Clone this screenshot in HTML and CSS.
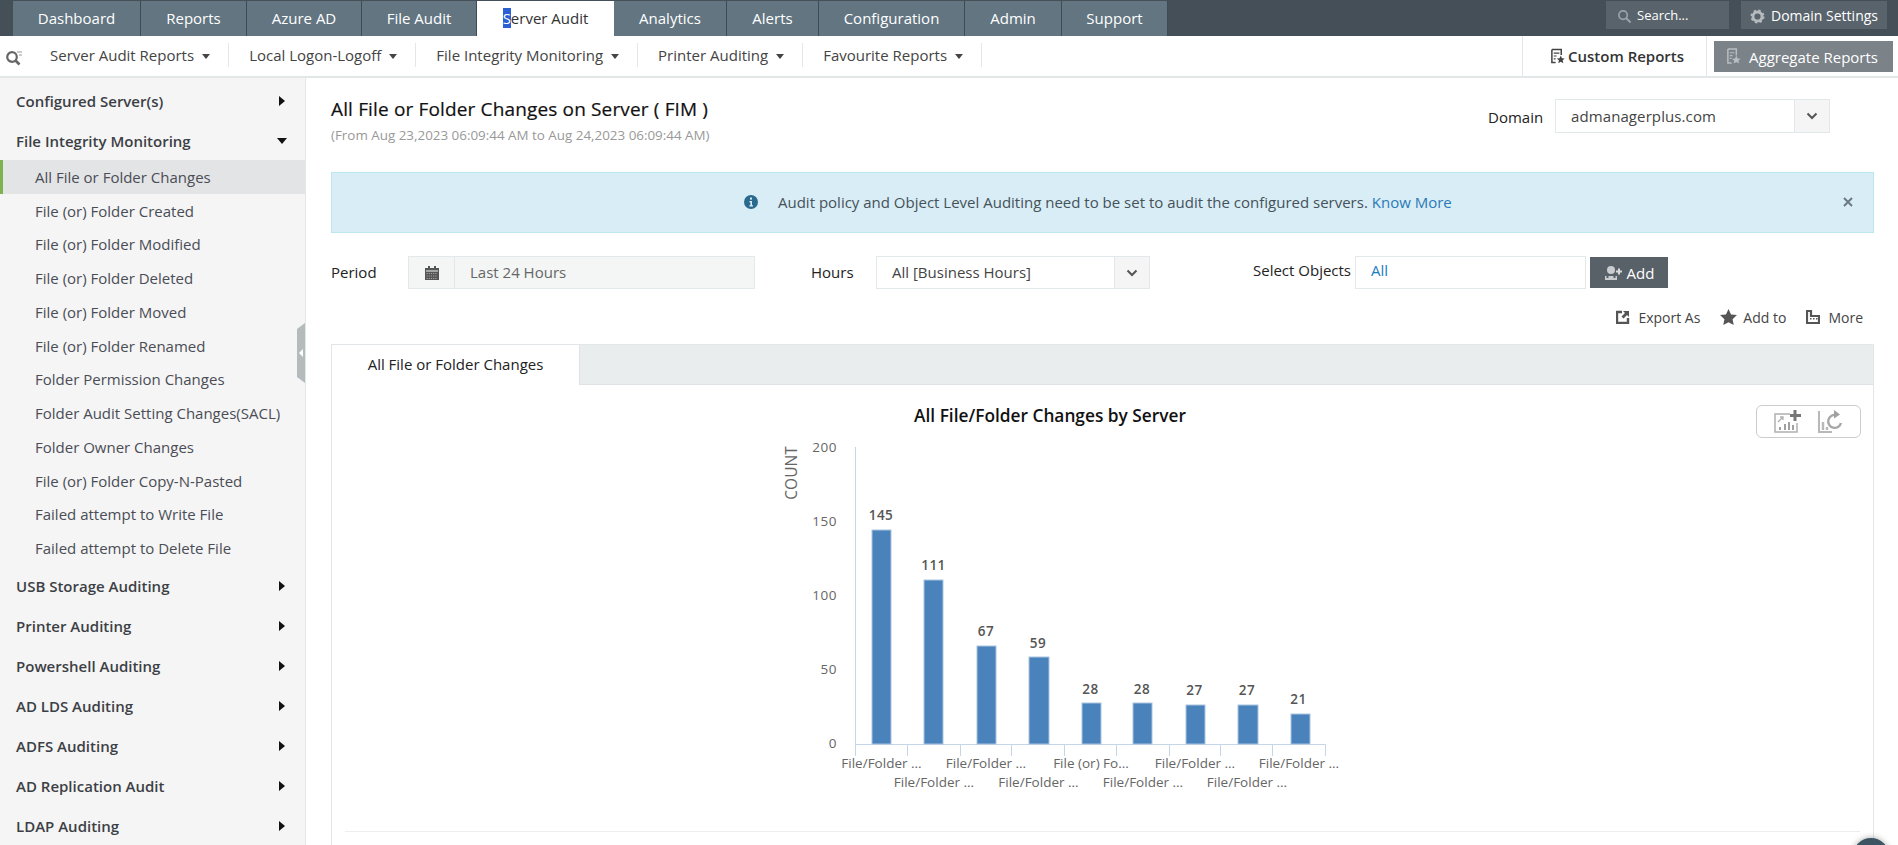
FILE: index.html
```html
<!DOCTYPE html>
<html lang="en">
<head>
<meta charset="utf-8">
<title>All File or Folder Changes on Server</title>
<link rel="stylesheet" href="styles.css">
</head>
<body>
<div class="page">
  <header class="topbar">
    <nav class="tabs">
      <a class="tab">Dashboard</a><a class="tab">Reports</a><a class="tab">Azure AD</a><a class="tab">File Audit</a>
      <a class="tab active"><span><span class="sel">S</span>erver Audit</span></a>
      <a class="tab">Analytics</a><a class="tab">Alerts</a><a class="tab">Configuration</a><a class="tab">Admin</a><a class="tab">Support</a>
    </nav>
    <div class="top-tools">
      <div class="top-box search-box">
        <svg class="top-icon" viewBox="0 0 16 16"><circle cx="6.5" cy="6.5" r="4.5" fill="none" stroke="#9aa3a8" stroke-width="1.8"/><path d="M10 10l4.5 4.5" stroke="#9aa3a8" stroke-width="2.2"/></svg>
        <span>Search...</span>
      </div>
      <div class="top-box settings-box">
        <svg class="top-icon" viewBox="0 0 16 16"><circle cx="8" cy="8" r="4.8" fill="none" stroke="#b4babd" stroke-width="3"/><circle cx="8" cy="8" r="6.6" fill="none" stroke="#b4babd" stroke-width="1.8" stroke-dasharray="2.6 2.6"/></svg>
        <span>Domain Settings</span>
      </div>
    </div>
  </header>

  <div class="subnav">
    <div class="subnav-search">
      <svg viewBox="0 0 18 16" width="18" height="16"><circle cx="7" cy="7" r="4.8" fill="none" stroke="#666" stroke-width="2.2"/><path d="M10.5 10.5l4 4" stroke="#666" stroke-width="2.6"/><path d="M12 2h5M14 5h3" stroke="#999" stroke-width="1.2"/></svg>
    </div>
    <a class="subnav-item">Server Audit Reports<i class="caret"></i></a>
    <a class="subnav-item">Local Logon-Logoff<i class="caret"></i></a>
    <a class="subnav-item">File Integrity Monitoring<i class="caret"></i></a>
    <a class="subnav-item">Printer Auditing<i class="caret"></i></a>
    <a class="subnav-item">Favourite Reports<i class="caret"></i></a>
    <div class="subnav-right">
      <a class="custom-link">
        <svg viewBox="0 0 16 16" width="15" height="16"><path d="M2 1h10v6M6 15H2V1" fill="none" stroke="#444" stroke-width="1.6"/><path d="M4 5h6M4 8h3M4 11h2" stroke="#444" stroke-width="1.3"/><path d="M11.5 7.5l1.3 2.8 3 .3-2.3 2 .7 3-2.7-1.6-2.7 1.6.7-3-2.3-2 3-.3z" fill="#444"/></svg>
        Custom Reports
      </a>
      <div class="agg-wrap">
        <a class="agg-link">
          <svg viewBox="0 0 16 18" width="15" height="17"><path d="M2 1h9v7M6 16H2V1" fill="none" stroke="#b9bec1" stroke-width="1.6"/><path d="M4 5h5M4 8h3M4 11h2" stroke="#b9bec1" stroke-width="1.3"/><path d="M11 8l1.4 3 3.2.3-2.4 2.1.7 3.1-2.9-1.7-2.9 1.7.7-3.1-2.4-2.1 3.2-.3z" fill="#b9bec1"/></svg>
          Aggregate Reports
        </a>
      </div>
    </div>
  </div>

  <div class="layout">
    <aside class="sidebar">
      <div class="group"><span>Configured Server(s)</span><i class="arrow-r"></i></div>
      <div class="group"><span>File Integrity Monitoring</span><i class="arrow-d"></i></div>
      <ul class="sublist">
        <li class="current">All File or Folder Changes</li>
        <li>File (or) Folder Created</li>
        <li>File (or) Folder Modified</li>
        <li>File (or) Folder Deleted</li>
        <li>File (or) Folder Moved</li>
        <li>File (or) Folder Renamed</li>
        <li>Folder Permission Changes</li>
        <li>Folder Audit Setting Changes(SACL)</li>
        <li>Folder Owner Changes</li>
        <li>File (or) Folder Copy-N-Pasted</li>
        <li>Failed attempt to Write File</li>
        <li>Failed attempt to Delete File</li>
      </ul>
      <div class="group"><span>USB Storage Auditing</span><i class="arrow-r"></i></div>
      <div class="group"><span>Printer Auditing</span><i class="arrow-r"></i></div>
      <div class="group"><span>Powershell Auditing</span><i class="arrow-r"></i></div>
      <div class="group"><span>AD LDS Auditing</span><i class="arrow-r"></i></div>
      <div class="group"><span>ADFS Auditing</span><i class="arrow-r"></i></div>
      <div class="group"><span>AD Replication Audit</span><i class="arrow-r"></i></div>
      <div class="group"><span>LDAP Auditing</span><i class="arrow-r"></i></div>
      <div class="collapse-handle"></div>
    </aside>

    <main class="main">
      <div class="report-head">
        <div>
          <h1 class="title">All File or Folder Changes on Server ( FIM )</h1>
          <p class="subtitle">(From Aug 23,2023 06:09:44 AM to Aug 24,2023 06:09:44 AM)</p>
        </div>
        <div class="domain">
          <label class="domain-label">Domain</label>
          <div class="select domain-select"><span class="select-text">admanagerplus.com</span><span class="select-btn"><svg class="chev" viewBox="0 0 12 8"><path d="M1.5 1.5L6 6l4.5-4.5" fill="none" stroke="#555" stroke-width="2"/></svg></span></div>
        </div>
      </div>

      <div class="alert">
        <svg class="alert-icon" viewBox="0 0 14 14" width="14" height="14"><circle cx="7" cy="7" r="7" fill="#2b6a8f"/><rect x="6" y="2.6" width="2" height="2" fill="#d9edf6"/><path d="M5.4 6h2.6v4.2h1v1.2H5.400v-1.200h1V7.200h-1z" fill="#d9edf6"/></svg>
        <span class="alert-text">Audit policy and Object Level Auditing need to be set to audit the configured servers. <a class="know">Know More</a></span>
        <svg class="alert-close" viewBox="0 0 10 10" width="10" height="10"><path d="M1 1l8 8M9 1l-8 8" stroke="#6b7a82" stroke-width="2"/></svg>
      </div>

      <div class="controls">
        <label class="ctl-label period-label">Period</label>
        <div class="period-box">
          <span class="period-icon"><svg viewBox="0 0 14 14" width="14" height="14"><path d="M0 2h14v12H0z" fill="#555"/><path d="M3 0h2v3H3zM9 0h2v3H9z" fill="#555"/><path d="M1 5h12" stroke="#f4f5f5" stroke-width="1"/><path d="M1.500 7.500h11M1.500 10h11M1.500 12.500h11" stroke="#bbb" stroke-width=".8" stroke-dasharray="1.200 1"/></svg></span>
          <span class="period-text">Last 24 Hours</span>
        </div>
        <label class="ctl-label hours-label">Hours</label>
        <div class="select hours-select"><span class="select-text">All [Business Hours]</span><span class="select-btn"><svg class="chev" viewBox="0 0 12 8"><path d="M1.500 1.500L6 6l4.500-4.500" fill="none" stroke="#555" stroke-width="2"/></svg></span></div>
        <label class="ctl-label objects-label">Select Objects</label>
        <div class="objects-input">All</div>
        <button class="add-btn">
          <svg viewBox="0 0 20 16" width="20" height="16"><circle cx="7" cy="5" r="4" fill="#c9cdd0"/><path d="M1 15v-4h1.500v2h2v-2h5v2h2v-2H13v4z" fill="#c9cdd0"/><path d="M15 3.500v6M12 6.500h6" stroke="#d8dbdd" stroke-width="2"/></svg>
          Add
        </button>
      </div>

      <div class="actions">
        <a class="action">
          <svg viewBox="0 0 14 14" width="14" height="14"><path d="M6 2H1v11h11V8" fill="none" stroke="#555" stroke-width="2.400"/><path d="M7 1h6v6l-2-2-3.500 3.500-2-2L9 3z" fill="#555"/></svg>
          Export As
        </a>
        <a class="action">
          <svg viewBox="0 0 18 17" width="17" height="16"><path d="M9 0l2.700 5.800 6.300.700-4.700 4.300 1.300 6.200L9 14l-5.600 3 1.300-6.200L0 6.500l6.300-.7z" fill="#555"/></svg>
          Add to
        </a>
        <a class="action">
          <svg viewBox="0 0 14 14" width="14" height="14"><path d="M1 13V1h4v5h8v7z" fill="none" stroke="#555" stroke-width="2.200"/><path d="M4 8h1.500v1.500H4zM7 8h1.500v1.500H7zM10 8h1.500v1.500H10z" fill="#555"/></svg>
          More
        </a>
      </div>

      <section class="panel">
        <div class="panel-tabs"><div class="panel-tab">All File or Folder Changes</div></div>
        <div class="panel-body">
          <div class="chart-tools">
            <svg viewBox="0 0 28 24" width="28" height="24"><path d="M17 4H2v18h22v-9" fill="none" stroke="#b0b0b0" stroke-width="1.500"/><path d="M5 12l5-5M7 7h3v3" fill="none" stroke="#b0b0b0" stroke-width="1.300"/><path d="M6 20v-3h2v3zM11 20v-6h2v6zM15 20v-8h2v8zM19 20v-5h2v5z" fill="#a0a0a0"/><path d="M22 0v11M17 5.500h11" stroke="#777" stroke-width="3"/></svg>
            <svg viewBox="0 0 26 24" width="26" height="24"><path d="M1 1v21h13" fill="none" stroke="#b8b8b8" stroke-width="2"/><path d="M5 20v-8M9 20v-3" stroke="#b8b8b8" stroke-width="2.400"/><path d="M23 13a6.500 6.500 0 1 1-5-8" fill="none" stroke="#a8a8a8" stroke-width="2.400"/><path d="M16 0l6 4.500-6 4z" fill="#a0a0a0"/></svg>
          </div>
          <svg class="chart" viewBox="332 386 1541 446" width="1541" height="446">
            <text class="chart-title" x="1050" y="422" text-anchor="middle">All File/Folder Changes by Server</text>
            <text class="axis-title" transform="translate(797 473) rotate(-90)" text-anchor="middle">COUNT</text>
            <g class="ylabels" text-anchor="end">
              <text x="837" y="452">200</text><text x="837" y="526">150</text><text x="837" y="600">100</text><text x="837" y="674">50</text><text x="837" y="748">0</text>
            </g>
            <path class="axis" d="M855.500 447V756M855 744.500H1325.500M907.500 744.500V756M960.500 744.500V756M1011.500 744.500V756M1064.500 744.500V756M1116.500 744.500V756M1169.500 744.500V756M1220.500 744.500V756M1272.500 744.500V756M1325.500 744.500V756"/>
            <g class="bars">
              <rect x="872" y="530" width="19" height="214"/>
              <rect x="924" y="580" width="19" height="164"/>
              <rect x="977" y="646" width="19" height="98"/>
              <rect x="1029" y="657" width="20" height="87"/>
              <rect x="1082" y="703" width="19" height="41"/>
              <rect x="1133" y="703" width="19" height="41"/>
              <rect x="1186" y="705" width="19" height="39"/>
              <rect x="1238" y="705" width="20" height="39"/>
              <rect x="1291" y="714" width="19" height="30"/>
            </g>
            <g class="values" text-anchor="middle">
              <text x="881" y="520">145</text><text x="933.500" y="570">111</text><text x="986" y="636">67</text><text x="1038" y="648">59</text><text x="1090.500" y="694">28</text><text x="1142" y="694">28</text><text x="1194.500" y="695">27</text><text x="1247" y="695">27</text><text x="1298.500" y="704">21</text>
            </g>
            <g class="xlabels" text-anchor="middle">
              <text x="881.500" y="768">File/Folder ...</text><text x="934" y="787">File/Folder ...</text><text x="986" y="768">File/Folder ...</text><text x="1038.500" y="787">File/Folder ...</text><text x="1091" y="768">File (or) Fo...</text><text x="1143" y="787">File/Folder ...</text><text x="1195" y="768">File/Folder ...</text><text x="1247" y="787">File/Folder ...</text><text x="1299" y="768">File/Folder ...</text>
            </g>
            <path class="chart-rule" d="M345 831.500H1860"/>
          </svg>
        </div>
      </section>
    </main>
  </div>
  <div class="float-btn"></div>
</div>
</body>
</html>
```

FILE: styles.css
```css
* { box-sizing: border-box; }
html, body { margin: 0; height: 845px; overflow: hidden; background: #fff; }
body { font-family: "Open Sans", "Noto Sans", sans-serif; font-size: 15px; color: #333; }
a { color: inherit; text-decoration: none; }
.page { position: relative; width: 1898px; height: 845px; overflow: hidden; }

.topbar { display: flex; justify-content: space-between; height: 36px; background: #444f57; padding-left: 13px; }
.tabs { display: grid; grid-template-columns: 128px 106px 115px 115px 137px 113px 92px 146px 97px 106px; padding-top: 1px; }
.tab { display: flex; align-items: center; justify-content: center; padding-bottom: 1px; background: #627581; color: #fff; border-right: 1px solid #3f4a52; }
.tab.active { background: #fff; color: #333; border-right: none; }
.sel { background: #2b5fd3; color: #fff; }
.top-tools { display: flex; gap: 12px; padding: 1px 11px 0 0; }
.top-box { height: 28px; display: flex; align-items: center; background: #58636b; color: #fff; font-size: 13px; }
.search-box { width: 123px; padding-left: 11px; gap: 5px; }
.settings-box { width: 146px; padding-left: 9px; gap: 6px; font-size: 14px; white-space: nowrap; }
.top-icon { width: 15px; height: 15px; flex: none; margin-top: 3px; }
.settings-box .top-icon { margin-top: 2px; }

.subnav { display: flex; align-items: center; height: 42px; background: #fff; border-bottom: 2px solid #e4e7e8; }
.subnav-search { width: 30px; padding: 3px 0 0 5px; display: flex; }
.subnav-item { display: flex; align-items: center; height: 24px; margin-bottom: 2px; padding: 0 18px 1px 20px; border-right: 1px solid #e4e7e8; color: #444; white-space: nowrap; }
.caret { width: 0; height: 0; margin-left: 8px; margin-top: 3px; border: 4.500px solid transparent; border-top: 5px solid #444; border-bottom: none; }
.subnav-right { margin-left: auto; display: flex; height: 40px; }
.custom-link { width: 185px; border-left: 1px solid #e4e7e8; border-right: 1px solid #e4e7e8; display: flex; align-items: center; gap: 3px; padding-left: 27px; font-weight: 600; color: #333; white-space: nowrap; }
.agg-wrap { width: 191px; padding: 5px 0 0 7px; }
.agg-link { display: flex; align-items: center; gap: 8px; width: 179px; height: 31px; padding-left: 12px; background: #7b8288; color: #fff; white-space: nowrap; }

.layout { display: flex; height: 767px; }
.sidebar { position: relative; flex: none; width: 306px; padding-top: 3px; background: #f5f5f5; border-right: 1px solid #e4e7e8; }
.group { display: flex; justify-content: space-between; align-items: center; height: 40px; padding: 0 20px 0 16px; font-weight: 600; color: #3c3f45; }
.arrow-r { width: 0; height: 0; border: 5px solid transparent; border-left: 6px solid #111; border-right: none; }
.arrow-d { width: 0; height: 0; margin-right: -2px; border: 5px solid transparent; border-top: 6px solid #111; border-bottom: none; }
.sublist { list-style: none; margin: -1px 0 1px; padding: 0; display: grid; grid-auto-rows: 33.75px; }
.sublist li { display: flex; align-items: center; padding-left: 35px; color: #4a4d55; }
.sublist .current { background: #e3e4e6; border-left: 3px solid #7bb34f; padding-left: 32px; }
.collapse-handle { position: absolute; right: 0; top: 245px; width: 8px; height: 60px; background: #b5bbbd; clip-path: polygon(100% 0, 100% 100%, 0 90%, 0 10%); }
.collapse-handle::after { content: ""; position: absolute; left: 2px; top: 26px; border: 4px solid transparent; border-right: 4px solid #fff; border-left: none; }

.main { flex: 1; padding: 0 24px 0 25px; min-width: 0; }
.report-head { display: flex; justify-content: space-between; height: 94px; }
.title { margin: 19px 0 0; font-size: 19px; line-height: 24px; font-weight: 500; letter-spacing: .15px; color: #111; -webkit-text-stroke: .2px #111; }
.subtitle { margin: 6px 0 0; font-size: 13.400px; line-height: 16px; color: #999; }
.domain { display: flex; align-items: flex-start; margin: 21px 44px 0 0; }
.domain-label { width: 67px; line-height: 36px; color: #222; }
.select { display: flex; height: 34px; border: 1px solid #e3e8ea; background: #fff; color: #444; }
.domain-select { width: 275px; }
.select-text { flex: 1; padding-left: 15px; line-height: 33px; }
.domain-select .select-text { letter-spacing: .1px; }
.select-btn { width: 35px; background: #f5f5f5; border-left: 1px solid #e3e8ea; display: flex; align-items: center; justify-content: center; }
.chev { width: 12px; height: 8px; }

.alert { display: flex; align-items: center; height: 61px; padding: 0 0 2px 412px; background: #d9edf6; border: 1px solid #bce6f0; color: #45525a; }
.alert-icon { flex: none; }
.alert-text { margin-left: 20px; flex: 1; }
.know { color: #2a7ab5; }
.alert-close { flex: none; margin-right: 20px; }

.controls { display: flex; align-items: flex-start; height: 33px; margin-top: 23px; }
.ctl-label { line-height: 33px; color: #222; }
.period-label { width: 77px; }
.period-box { display: flex; width: 347px; height: 33px; background: #f4f5f5; border: 1px solid #e3e8ea; color: #666; }
.period-icon { width: 46px; border-right: 1px solid #e3e8ea; display: flex; align-items: center; justify-content: center; }
.period-text { padding-left: 15px; line-height: 31px; }
.hours-label { margin-left: 56px; width: 65px; }
.hours-select { width: 274px; height: 33px; }
.hours-select .select-text { line-height: 31px; }
.objects-label { margin-left: 103px; width: 102px; line-height: 29px; white-space: nowrap; }
.objects-input { width: 231px; height: 33px; padding-left: 15px; line-height: 27px; border: 1px solid #e3e8ea; color: #1a7dc0; }
.add-btn { display: flex; align-items: center; justify-content: center; gap: 3px; width: 78px; height: 31px; margin: 1px 0 0 4px; padding: 0; border: none; background: #586068; color: #fff; font: 15px "Open Sans", sans-serif; }

.actions { display: flex; justify-content: flex-end; gap: 20px; height: 20px; margin-top: 18px; padding-right: 11px; font-size: 14px; }
.action { display: flex; align-items: center; gap: 8px; color: #444; }
.action:nth-child(2) { gap: 6px; }

.panel { margin-top: 17px; border: 1px solid #e3e6e8; border-bottom: none; height: 520px; }
.panel-tabs { height: 40px; background: #e9edee; border-bottom: 1px solid #dfe3e5; }
.panel-tab { width: 248px; height: 40px; background: #fff; border-right: 1px solid #dfe3e5; text-align: center; line-height: 39px; color: #222; }
.panel-body { position: relative; }
.chart { display: block; margin-top: 1px; }
.chart-tools { position: absolute; left: 1424px; top: 19px; display: flex; align-items: center; justify-content: center; gap: 17px; width: 105px; height: 33px; border: 1px solid #ccc; border-radius: 6px; background: #fff; }
.chart-title { font: 600 17.300px "Open Sans", sans-serif; fill: #111; }
.axis-title { font: 15.500px "Open Sans", sans-serif; fill: #666; }
.ylabels text { font: 13.500px "Open Sans", sans-serif; fill: #666; letter-spacing: .5px; }
.xlabels text { font: 13.500px "Open Sans", sans-serif; fill: #666; }
.values text { font: 600 13.500px "Open Sans", sans-serif; fill: #555; letter-spacing: .5px; }
.axis { fill: none; stroke: #c6d6e8; stroke-width: 1; }
.bars rect { fill: #4a82bc; stroke: #a9c4e0; stroke-width: 1; }
.chart-rule { stroke: #eee; stroke-width: 1; }

.float-btn { position: absolute; left: 1853px; top: 838px; width: 36px; height: 36px; border-radius: 50%; background: #3d5463; box-shadow: 0 0 6px rgba(0,0,0,.35); }
```
